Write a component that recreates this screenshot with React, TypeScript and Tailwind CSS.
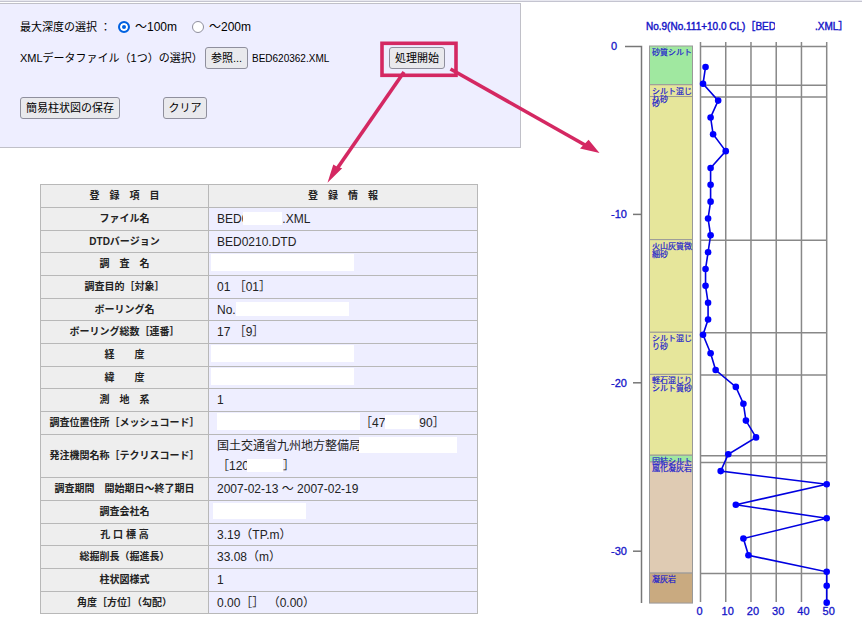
import { useState } from 'react'
import type { ReactNode } from 'react'

type Row = {
  label: string
  value: ReactNode
  flush?: boolean
  tall?: boolean
}

type Layer = {
  top: number
  bottom: number
  color: string
  lines: string[]
}

// White box over a value that is not published
function Blank({ className }: { className: string }) {
  return <span className={`mb-[3px] inline-block bg-white align-middle ${className}`} />
}

const rows: Row[] = [
  { label: 'ファイル名', value: <>BED0<Blank className="-ml-[5px] h-[13px] w-[39px]" />.XML</> },
  { label: 'DTDバージョン', value: 'BED0210.DTD' },
  { label: '調　査　名', value: <Blank className="h-[17px] w-[143px]" />, flush: true },
  { label: '調査目的［対象］', value: '01 ［01］' },
  { label: 'ボーリング名', value: <>No.<Blank className="h-[14px] w-[113px]" /></> },
  { label: 'ボーリング総数［連番］', value: '17 ［9］' },
  { label: '経　　度', value: <Blank className="h-[17px] w-[143px]" />, flush: true },
  { label: '緯　　度', value: <Blank className="h-[17px] w-[143px]" />, flush: true },
  { label: '測　地　系', value: '1' },
  {
    label: '調査位置住所［メッシュコード］',
    value: (
      <>
        <Blank className="h-[17px] w-[143px]" />［47
        <Blank className="h-[14px] w-[34px]" />90］
      </>
    ),
  },
  {
    label: '発注機関名称［テクリスコード］',
    value: (
      <>
        国土交通省九州地方整備局
        <Blank className="-ml-[2px] h-4 w-[98px]" />
        <br />
        ［120
        <Blank className="-ml-[2px] h-[13px] w-[36px]" />］
      </>
    ),
    tall: true,
  },
  { label: '調査期間　開始期日～終了期日', value: '2007-02-13 ～ 2007-02-19' },
  { label: '調査会社名', value: <Blank className="ml-[2px] h-4 w-[93px]" />, flush: true },
  { label: '孔 口 標 高', value: '3.19（TP.m）' },
  { label: '総掘削長（掘進長）', value: '33.08（m）' },
  { label: '柱状図様式', value: '1' },
  { label: '角度［方位］（勾配）', value: '0.00［］ （0.00）' },
]

const layers: Layer[] = [
  { top: 0, bottom: 2.3, color: '#a0e8a0', lines: ['砂質シルト'] },
  { top: 2.3, bottom: 3, color: '#e6e69b', lines: ['シルト混じ', 'り砂'] },
  { top: 3, bottom: 11.5, color: '#e6e69b', lines: ['砂'] },
  { top: 11.5, bottom: 17, color: '#e6e69b', lines: ['火山灰質微', '細砂'] },
  { top: 17, bottom: 19.5, color: '#e6e69b', lines: ['シルト混じ', 'り砂'] },
  { top: 19.5, bottom: 24.3, color: '#e6e69b', lines: ['軽石混じり', 'シルト質砂'] },
  { top: 24.3, bottom: 24.7, color: '#a0e8a0', lines: ['固結シルト'] },
  { top: 24.7, bottom: 31.3, color: '#dfcbb3', lines: ['風化凝灰岩'] },
  { top: 31.3, bottom: 33.08, color: '#c9aa80', lines: ['凝灰岩'] },
]

// [depth in m, N value]
const nValues: [number, number][] = [
  [1.22, 2], [2.22, 1], [3.22, 7], [4.22, 4], [5.22, 5], [6.22, 10], [7.22, 4], [8.22, 4],
  [9.22, 4], [10.22, 3], [11.22, 4], [12.22, 3], [13.22, 2], [14.22, 2], [15.22, 3], [16.22, 3],
  [17.12, 1], [18.22, 4], [19.22, 6], [20.22, 14], [21.22, 17], [22.22, 18], [23.22, 22],
  [24.22, 11], [25.22, 8], [26, 50], [27.22, 14], [28.02, 50], [29.22, 17], [30.22, 19],
  [31.2, 50], [32.03, 50], [33.03, 50],
]

const depthY = (depth: number) => 43 + depth * 16.84
const nX = (n: number) => 100.5 + n * 2.524

const buttonClass =
  'h-[22px] rounded-[3px] border border-[#8f8f9d] bg-[#e9e9ed] text-[11px] leading-none text-black whitespace-nowrap'

function DepthOption({ value, checked, onSelect }: { value: string; checked: boolean; onSelect: () => void }) {
  return (
    <label className="flex w-[74px] items-center gap-[5px] text-[12px] whitespace-nowrap">
      <input
        type="radio"
        name="depth"
        checked={checked}
        onChange={onSelect}
        className="size-3 shrink-0 appearance-none rounded-full border border-[#8f8f9d] bg-white checked:border-2 checked:border-[#0061e0] checked:bg-[#0061e0] checked:shadow-[inset_0_0_0_2px_white]"
      />
      ～{value}m
    </label>
  )
}

function Callout() {
  return (
    <svg
      className="pointer-events-none absolute -top-[7px] -left-[65px] z-10 h-[148px] w-[280px] max-w-none"
      viewBox="0 0 280 148"
      fill="none"
      stroke="#d42862"
      strokeWidth="3.6"
      aria-hidden="true"
    >
      <rect x="58" y="3.3" width="74" height="32" />
      <path d="M80 32 L13.5 128" />
      <path d="M126.5 29 L261 105" />
      <path d="M3.5 142.8 L9.3 124.5 L13.5 127 L18.2 128.3 Z" fill="#d42862" stroke="none" />
      <path d="M275.5 113 L256 108.6 L260 104.5 L264.6 99.8 Z" fill="#d42862" stroke="none" />
    </svg>
  )
}

function ControlPanel() {
  const [depth, setDepth] = useState('100')

  return (
    <form
      className="border border-l-0 border-[#c0c0c8] bg-[#eeeeff] pt-3 pb-7 pl-5 text-[11px]"
      onSubmit={(e) => e.preventDefault()}
    >
      <div className="flex h-[22px] items-center">
        <span className="w-[98px] whitespace-nowrap">最大深度の選択 ：</span>
        <DepthOption value="100" checked={depth === '100'} onSelect={() => setDepth('100')} />
        <DepthOption value="200" checked={depth === '200'} onSelect={() => setDepth('200')} />
      </div>

      <div className="mt-[9px] flex h-[22px] items-center">
        <span className="w-[185px] whitespace-nowrap">XMLデータファイル（1つ）の選択）</span>
        <button type="button" className={`${buttonClass} w-[43px]`}>参照...</button>
        <span className="ml-1 w-[137px] text-[10px]">BED620362.XML</span>
        <div className="relative">
          <button type="submit" className={`${buttonClass} w-14`}>処理開始</button>
          <Callout />
        </div>
      </div>

      <div className="mt-7 flex gap-[43px]">
        <button type="button" className={`${buttonClass} w-[100px]`}>簡易柱状図の保存</button>
        <button type="reset" className={`${buttonClass} w-11`}>クリア</button>
      </div>
    </form>
  )
}

function InfoTable() {
  return (
    <table className="w-full border-collapse text-[#222]">
      <thead>
        <tr className="h-[23px] bg-[#eeeeee] text-[10px] leading-5">
          <th className="w-[168px] border border-[#b8b8b8] p-0">登　録　項　目</th>
          <th className="border border-[#b8b8b8] p-0">登　録　情　報</th>
        </tr>
      </thead>
      <tbody>
        {rows.map((row) => (
          <tr key={row.label} className={row.tall ? 'h-[43px]' : 'h-[23px] nth-[3n+2]:h-[22px]'}>
            <th className="border border-[#b8b8b8] bg-[#eeeeee] p-0 text-[10px] leading-5 whitespace-nowrap">
              {row.label}
            </th>
            <td
              className={`border border-[#b8b8b8] bg-[#eeeeff] py-0 pr-0 text-[12px] leading-5 ${row.flush ? 'pl-[2px]' : 'pl-2'}`}
            >
              {row.value}
            </td>
          </tr>
        ))}
      </tbody>
    </table>
  )
}

function BoringChart() {
  const bottom = 600

  return (
    <svg viewBox="0 0 262 620" className="w-[262px] shrink-0 self-start" role="img" aria-label="簡易柱状図">
      <g fill="#1414c8" stroke="#1414c8" strokeWidth="0.4" fontSize="10">
        <text x="46" y="27">No.9(No.111+10.0 CL)［BED</text>
        <text x="215" y="27">.XML］</text>
      </g>
      <rect x="175" y="15" width="40" height="16" fill="#fff" />

      {/* Depth axis */}
      <path d={`M25 43.5 H41.5 V${bottom}`} fill="none" stroke="#777" strokeWidth="1.5" />
      {[10, 20, 30].map((d) => (
        <path key={d} d={`M33 ${depthY(d)} H41.5`} stroke="#777" strokeWidth="1.5" />
      ))}
      <g fill="#1414c8" stroke="#1414c8" strokeWidth="0.3" fontSize="11">
        <text x="11" y="47">0</text>
        {[10, 20, 30].map((d) => (
          <text key={d} x="11" y={depthY(d) + 4}>-{d}</text>
        ))}
      </g>

      {/* Soil column */}
      {layers.map((layer) => (
        <rect
          key={layer.top}
          x="49.5"
          y={depthY(layer.top)}
          width="43"
          height={depthY(layer.bottom) - depthY(layer.top)}
          fill={layer.color}
          stroke="#999"
        />
      ))}
      <g fill="#2222cc" stroke="#2222cc" strokeWidth="0.2" fontSize="8">
        {layers.map((layer) =>
          layer.lines.map((line, i) => (
            <text key={`${layer.top}-${i}`} x="52" y={depthY(layer.top) + 9 + i * 8}>{line}</text>
          )),
        )}
      </g>

      {/* Grid */}
      <g stroke="#888" strokeWidth="1.5">
        {[0, 10, 20, 30, 40, 50].map((n) => (
          <path key={n} d={`M${nX(n)} 39 V${bottom - 1}`} />
        ))}
        {layers.map((layer) => (
          <path key={layer.top} d={`M100.5 ${depthY(layer.top) + 0.5} H227`} />
        ))}
      </g>

      <polyline
        points={nValues.map(([d, n]) => `${nX(n)},${depthY(d) + 0.4}`).join(' ')}
        fill="none"
        stroke="#0000e0"
        strokeWidth="1.6"
      />
      {nValues.map(([d, n]) => (
        <circle key={d} cx={nX(n)} cy={depthY(d) + 0.4} r="3.3" fill="#0000ff" />
      ))}

      <g fill="#1414c8" stroke="#1414c8" strokeWidth="0.3" fontSize="11" textAnchor="middle">
        {[0, 10, 20, 30, 40, 50].map((n) => (
          <text key={n} x={nX(n) + (n === 0 ? -1 : 2)} y="612">{n}</text>
        ))}
      </g>
    </svg>
  )
}

export default function App() {
  return (
    <div
      lang="ja"
      className="min-h-screen bg-white font-['Liberation_Sans','Noto_Sans_CJK_JP',sans-serif] text-black"
    >
      <div className="mb-px h-[2px] border-b border-[#c4c4d0] bg-[#e8e8f0]" />
      <main className="flex gap-[79px]">
        <div className="min-w-0 flex-1">
          <ControlPanel />
          <div className="pt-9 pr-[43px] pl-10">
            <InfoTable />
          </div>
        </div>
        <BoringChart />
      </main>
    </div>
  )
}
